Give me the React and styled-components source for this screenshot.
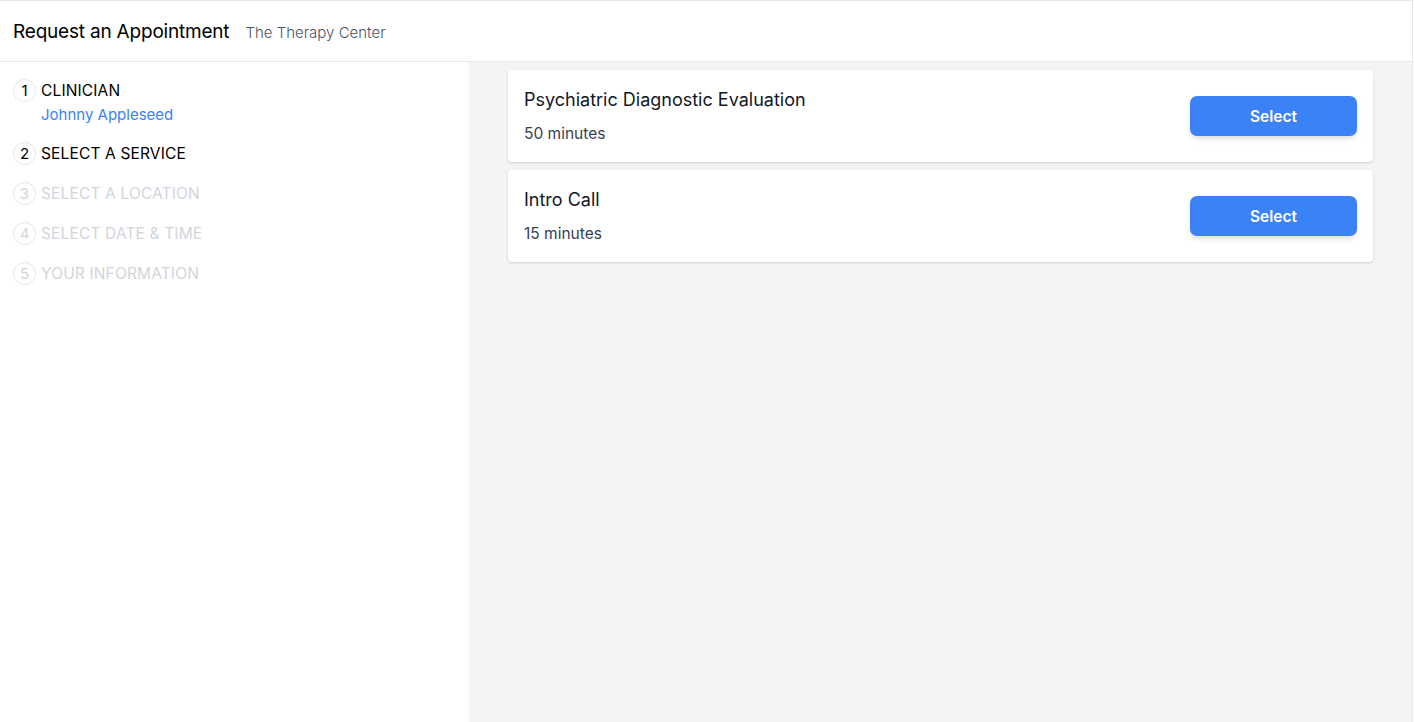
import React from "react";
import styled, { createGlobalStyle } from "styled-components";

const GlobalStyle = createGlobalStyle`
  body {
    margin: 0;
    font-family: Inter, "Noto Sans", sans-serif;
    background: #ffffff;
  }
`;

const Frame = styled.div`
  width: 1413px;
  height: 722px;
  box-sizing: border-box;
  border-top: 1px solid #e5e7eb;
  border-right: 1px solid #e5e7eb;
  display: flex;
  flex-direction: column;
`;

const Header = styled.header`
  height: 60px;
  flex-shrink: 0;
  display: flex;
  align-items: center;
  padding: 0 13px;
  border-bottom: 1px solid #e5e7eb;
`;

const Title = styled.h1`
  margin: 0;
  font-size: 19px;
  font-weight: 400;
  color: #000;
  letter-spacing: -0.2px;
`;

const Org = styled.span`
  margin-left: 16px;
  margin-top: 2px;
  font-size: 15px;
  font-weight: 300;
  color: #4b5563;
`;

const Body = styled.div`
  flex: 1;
  display: flex;
  min-height: 0;
`;

const Sidebar = styled.nav`
  width: 469px;
  flex-shrink: 0;
  background: #fff;
  padding: 17px 13px;
  box-sizing: border-box;
  display: flex;
  flex-direction: column;
  gap: 17px;
`;

const Step = styled.div`
  display: flex;
  align-items: flex-start;
  gap: 5px;
  color: ${(p) => (p.$muted ? "#d1d5db" : "#000")};
`;

const StepNum = styled.span`
  width: 21px;
  height: 21px;
  border: 1px solid #e5e7eb;
  border-radius: 50%;
  display: flex;
  align-items: center;
  justify-content: center;
  font-size: 15px;
  flex-shrink: 0;
`;

const StepText = styled.div`
  display: flex;
  flex-direction: column;
  gap: 3px;
  padding-top: 1px;
`;

const StepLabel = styled.span`
  font-size: 15.5px;
  line-height: 21px;
  letter-spacing: 0.15px;
`;

const StepValue = styled.span`
  font-size: 15px;
  line-height: 21px;
  color: #3b82f6;
`;

const Main = styled.main`
  flex: 1;
  background: #f3f4f6;
  padding: 8px 39px;
  display: flex;
  flex-direction: column;
  gap: 8px;
`;

const Card = styled.div`
  background: #fff;
  border-radius: 4px;
  box-shadow: 0 1px 3px rgba(0, 0, 0, 0.1), 0 1px 2px rgba(0, 0, 0, 0.06);
  height: 92px;
  box-sizing: border-box;
  padding: 0 16px;
  display: flex;
  align-items: center;
  justify-content: space-between;
`;

const CardInfo = styled.div`
  display: flex;
  flex-direction: column;
  gap: 14px;
`;

const CardTitle = styled.div`
  font-size: 18px;
  color: #111827;
`;

const CardMeta = styled.div`
  font-size: 15.5px;
  color: #374151;
`;

const SelectButton = styled.button`
  width: 167px;
  height: 40px;
  border: none;
  border-radius: 7px;
  background: #3b82f6;
  color: #fff;
  font-family: inherit;
  font-size: 15.5px;
  font-weight: 600;
  box-shadow: 0 4px 6px -1px rgba(0, 0, 0, 0.1), 0 2px 4px -1px rgba(0, 0, 0, 0.06);
  cursor: pointer;
`;

const steps = [
  { n: 1, label: "CLINICIAN", value: "Johnny Appleseed" },
  { n: 2, label: "SELECT A SERVICE" },
  { n: 3, label: "SELECT A LOCATION", muted: true },
  { n: 4, label: "SELECT DATE & TIME", muted: true },
  { n: 5, label: "YOUR INFORMATION", muted: true },
];

const services = [
  { name: "Psychiatric Diagnostic Evaluation", duration: "50 minutes" },
  { name: "Intro Call", duration: "15 minutes" },
];

export default function App() {
  return (
    <>
      <GlobalStyle />
      <Frame>
        <Header>
          <Title>Request an Appointment</Title>
          <Org>The Therapy Center</Org>
        </Header>
        <Body>
          <Sidebar>
            {steps.map((s) => (
              <Step key={s.n} $muted={s.muted}>
                <StepNum>{s.n}</StepNum>
                <StepText>
                  <StepLabel>{s.label}</StepLabel>
                  {s.value && <StepValue>{s.value}</StepValue>}
                </StepText>
              </Step>
            ))}
          </Sidebar>
          <Main>
            {services.map((s) => (
              <Card key={s.name}>
                <CardInfo>
                  <CardTitle>{s.name}</CardTitle>
                  <CardMeta>{s.duration}</CardMeta>
                </CardInfo>
                <SelectButton>Select</SelectButton>
              </Card>
            ))}
          </Main>
        </Body>
      </Frame>
    </>
  );
}
